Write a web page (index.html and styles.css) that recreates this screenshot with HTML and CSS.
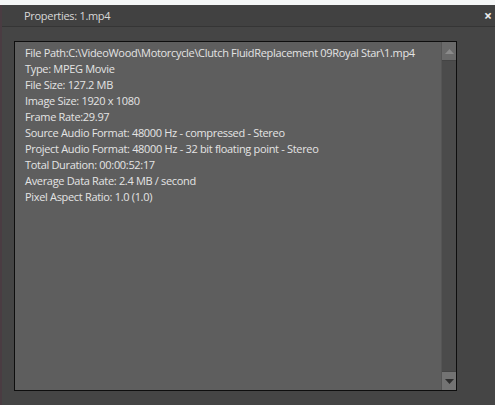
FILE: index.html
```html
<!DOCTYPE html>
<html>
<head>
<meta charset="utf-8">
<link rel="stylesheet" href="styles.css">
</head>
<body>
<div class="topstrip"></div>
<div class="window">
  <div class="titlebar">
    <span class="title">Properties: 1.mp4</span>
    <span class="close">×</span>
  </div>
  <div class="content">
    <div class="listbox">
      <div class="lines">
        <div>File Path:C:\VideoWood\Motorcycle\Clutch FluidReplacement 09Royal Star\1.mp4</div>
        <div>Type: MPEG Movie</div>
        <div>File Size: 127.2 MB</div>
        <div>Image Size: 1920 x 1080</div>
        <div>Frame Rate:29.97</div>
        <div>Source Audio Format: 48000 Hz - compressed - Stereo</div>
        <div>Project Audio Format: 48000 Hz - 32 bit floating point - Stereo</div>
        <div>Total Duration: 00:00:52:17</div>
        <div>Average Data Rate: 2.4 MB / second</div>
        <div>Pixel Aspect Ratio: 1.0 (1.0)</div>
      </div>
      <div class="scrollbar">
        <div class="sbtn up"><svg width="9" height="5" viewBox="0 0 9 5"><path d="M0 5 L4.5 0 L9 5 Z" fill="#8a8a8a"/></svg></div>
        <div class="track"></div>
        <div class="sbtn down"><svg width="9" height="5" viewBox="0 0 9 5"><path d="M0 0 L4.5 5 L9 0 Z" fill="#2e2e2e"/></svg></div>
      </div>
    </div>
  </div>
</div>
</body>
</html>
```

FILE: styles.css
```css
html, body {
  margin: 0;
  padding: 0;
}
body {
  width: 495px;
  height: 405px;
  overflow: hidden;
  background: #434343;
  font-family: "Open Sans", "Noto Sans", sans-serif;
}
.topstrip {
  height: 5px;
  background: #f4f6f6;
}
.window {
  height: 400px;
  display: flex;
  flex-direction: column;
  border-left: 2px solid #4a3c42;
  box-sizing: border-box;
}
.titlebar {
  height: 23px;
  background: #414141;
  border-bottom: 1px solid #353535;
  display: flex;
  align-items: center;
  justify-content: space-between;
  padding: 0 3px 0 22px;
  box-sizing: content-box;
}
.title {
  color: #d8d8d8;
  font-size: 11px;
  letter-spacing: -0.3px;
}
.close {
  color: #ececec;
  font-size: 14px;
  font-weight: bold;
  line-height: 1;
}
.content {
  flex: 1;
  background: #454545;
  padding: 14px 38px 14px 12px;
}
.listbox {
  height: 348px;
  border: 1px solid #0e0e0e;
  background: #5e5e5e;
  display: flex;
}
.lines {
  flex: 1;
  padding: 3px 0 0 10px;
  color: #e4e4e4;
  font-size: 11px;
  line-height: 16px;
  letter-spacing: -0.32px;
  white-space: nowrap;
}
.scrollbar {
  width: 14px;
  border-left: 1px solid #555;
  display: flex;
  flex-direction: column;
}
.sbtn {
  height: 18px;
  background: #6a6a6a;
  display: flex;
  align-items: center;
  justify-content: center;
}
.sbtn.down {
  background: #737373;
}
.track {
  flex: 1;
  background: #4b4b4b;
  border-top: 1px solid #444;
  border-bottom: 1px solid #444;
}
```
